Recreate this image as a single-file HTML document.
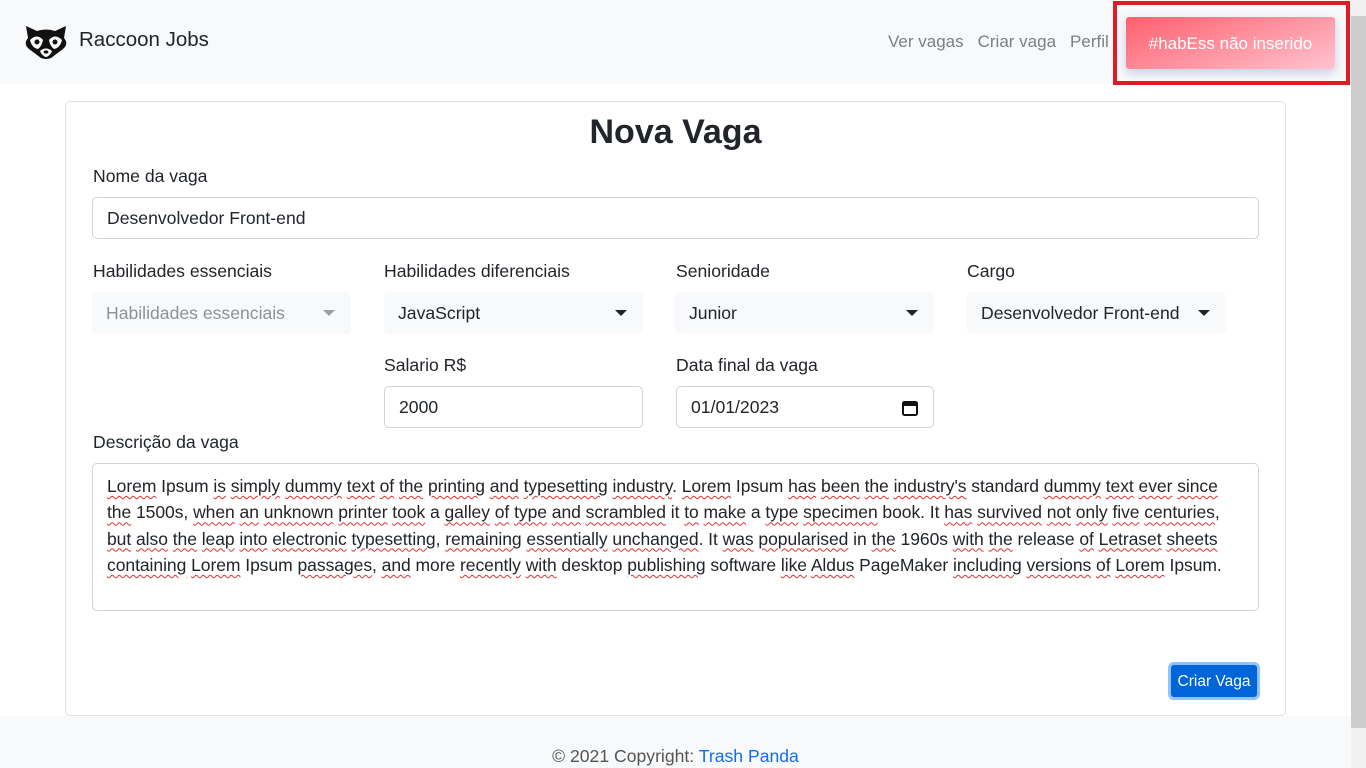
<!DOCTYPE html>
<html><head><meta charset="utf-8"><style>
*{box-sizing:border-box;margin:0;padding:0}
body{width:1366px;height:768px;overflow:hidden;font-family:"Liberation Sans",sans-serif;color:#212529;background:#f8f9fa;position:relative;font-size:17.6px}
.nav{position:absolute;left:0;top:0;width:1351px;height:84px;background:#f8f9fa}
.brand{position:absolute;left:79px;top:28px;font-size:20.5px;color:#212529}
.links{position:absolute;top:32px;left:888px;color:#7b7f83;font-size:17px}
.links span{margin-right:14px}
.main{position:absolute;left:0;top:84px;width:1351px;height:632px;background:#fff}
.card{position:absolute;left:65px;top:101px;width:1221px;height:615px;border:1px solid #dfe1e3;border-radius:5px;background:#fff}
h1{position:absolute;left:0;width:1351px;text-align:center;top:113px;font-size:34px;font-weight:bold}
.lbl{position:absolute;font-size:17.6px}
.inp{position:absolute;height:42px;border:1px solid #ced4da;border-radius:5px;background:#fff;padding:0 14px;line-height:40px;font-size:17.6px}
.sel{position:absolute;height:42px;border-radius:5px;background:#f8f9fa;padding:0 14px;line-height:42px;font-size:17.6px;width:259px}
.sel:after{content:"";position:absolute;right:16px;top:18px;border-left:6px solid transparent;border-right:6px solid transparent;border-top:6px solid #212529}
.sel.dis{color:#8e9296}.sel.dis:after{border-top-color:#9aa0a5}
.ta{position:absolute;left:92px;top:463px;width:1167px;height:148px;border:1px solid #ced4da;border-radius:5px;padding:9px 14px;line-height:26.3px;font-size:17.5px;letter-spacing:-0.05px}
.ta u{text-decoration:underline wavy #d33;text-underline-offset:3px;text-decoration-thickness:1px}
.btn{position:absolute;left:1168px;top:662px;width:92px;height:38px;background:#0065d9;border:3px solid #90c2fb;border-radius:6px;color:#fff;font-size:15.5px;text-align:center;line-height:33px}
.foot{position:absolute;left:0;top:746px;width:1351px;text-align:center;font-size:17.6px;color:#555}
.foot a{color:#0d6efd;text-decoration:none}
.toastbox{position:absolute;left:1113px;top:1px;width:237px;height:84px;border:4px solid #e01b24}
.toast{position:absolute;left:1126px;top:17px;width:209px;height:52px;border-radius:3px;background:linear-gradient(160deg,#ff5f6d,#ffc3d0);color:#fff;font-size:17px;text-align:center;line-height:54px;box-shadow:0 4px 10px rgba(120,120,200,.35)}
.sb{position:absolute;left:1351px;top:0;width:15px;height:768px;background:#f0f0f0}
.thumb{position:absolute;left:1351px;top:16px;width:15px;height:712px;background:#cdcdcd}
</style></head><body>
<div class="nav">
<svg style="position:absolute;left:23px;top:24px" width="46" height="36" viewBox="0 0 46 36"><path d="M3 2 L14 7 Q23 4 32 7 L43 2 L41 14 Q46 20 40 25 L28 34 Q23 36 18 34 L6 25 Q0 20 5 14Z" fill="#111"/><path d="M7 16 Q14 9 20 16 Q19 22 15 25 Q9 24 7 16Z M39 16 Q32 9 26 16 Q27 22 31 25 Q37 24 39 16Z" fill="#fff"/><circle cx="14" cy="18" r="2.5" fill="#111"/><circle cx="32" cy="18" r="2.5" fill="#111"/><path d="M17 27 Q23 22 29 27 Q27 32 23 33 Q19 32 17 27Z" fill="#fff"/><ellipse cx="23" cy="28" rx="2.5" ry="1.6" fill="#111"/></svg>
<div class="brand">Raccoon Jobs</div>
<div class="links"><span>Ver vagas</span><span>Criar vaga</span><span>Perfil</span></div>
</div>
<div class="main"></div>
<div class="card"></div>
<h1>Nova Vaga</h1>
<div class="lbl" style="left:93px;top:166px">Nome da vaga</div>
<div class="inp" style="left:92px;top:197px;width:1167px">Desenvolvedor Front-end</div>
<div class="lbl" style="left:93px;top:261px">Habilidades essenciais</div>
<div class="lbl" style="left:384px;top:261px">Habilidades diferenciais</div>
<div class="lbl" style="left:676px;top:261px">Senioridade</div>
<div class="lbl" style="left:967px;top:261px">Cargo</div>
<div class="sel dis" style="left:92px;top:292px">Habilidades essenciais</div>
<div class="sel" style="left:384px;top:292px">JavaScript</div>
<div class="sel" style="left:675px;top:292px">Junior</div>
<div class="sel" style="left:967px;top:292px">Desenvolvedor Front-end</div>
<div class="lbl" style="left:384px;top:355px">Salario R$</div>
<div class="lbl" style="left:676px;top:355px">Data final da vaga</div>
<div class="inp" style="left:384px;top:386px;width:259px">2000</div>
<div class="inp" style="left:676px;top:386px;width:258px">01/01/2023<svg style="position:absolute;right:15px;top:13px" width="16" height="16" viewBox="0 0 16 16"><rect x="1" y="2" width="14" height="13" rx="1.5" fill="none" stroke="#111" stroke-width="2"/><rect x="1" y="2" width="14" height="4" fill="#111"/></svg></div>
<div class="lbl" style="left:93px;top:432px">Descrição da vaga</div>
<div class="ta"><u>Lorem</u> Ipsum <u>is</u> <u>simply</u> <u>dummy</u> <u>text</u> <u>of</u> <u>the</u> <u>printing</u> <u>and</u> <u>typesetting</u> <u>industry</u>. <u>Lorem</u> Ipsum <u>has</u> <u>been</u> <u>the</u> <u>industry's</u> standard <u>dummy</u> <u>text</u> <u>ever</u> <u>since</u> <u>the</u> 1500s, <u>when</u> <u>an</u> <u>unknown</u> <u>printer</u> <u>took</u> a <u>galley</u> <u>of</u> <u>type</u> <u>and</u> <u>scrambled</u> it <u>to</u> <u>make</u> a <u>type</u> <u>specimen</u> book. It <u>has</u> <u>survived</u> <u>not</u> <u>only</u> <u>five</u> <u>centuries</u>, <u>but</u> <u>also</u> <u>the</u> <u>leap</u> <u>into</u> <u>electronic</u> <u>typesetting</u>, <u>remaining</u> <u>essentially</u> <u>unchanged</u>. It <u>was</u> <u>popularised</u> in <u>the</u> 1960s <u>with</u> <u>the</u> release <u>of</u> <u>Letraset</u> <u>sheets</u> <u>containing</u> <u>Lorem</u> Ipsum <u>passages</u>, <u>and</u> more <u>recently</u> <u>with</u> desktop <u>publishing</u> software <u>like</u> <u>Aldus</u> PageMaker <u>including</u> <u>versions</u> <u>of</u> <u>Lorem</u> Ipsum.</div>
<div class="btn">Criar Vaga</div>
<div class="foot">© 2021 Copyright: <a>Trash Panda</a></div>
<div class="toastbox"></div>
<div class="toast">#habEss não inserido</div>
<div class="sb"></div><div class="thumb"></div>
</body></html>
